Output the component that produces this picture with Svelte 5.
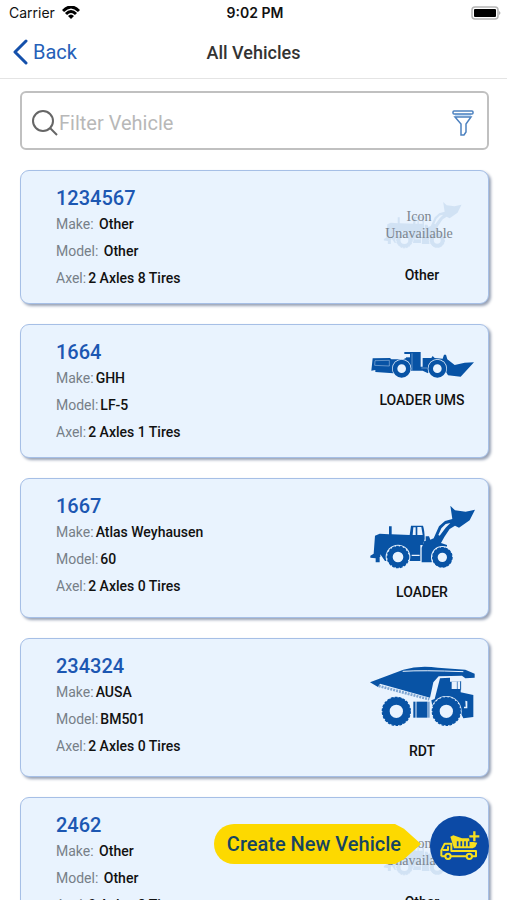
<script lang="ts">
  type Kind = 'none' | 'ums' | 'loader' | 'rdt';
  type Vehicle = { id: string; make: string; model: string; axel: string; type: string; kind: Kind };

  const vehicles: Vehicle[] = [
    { id: '1234567', make: ' Other', model: ' Other', axel: '2 Axles 8 Tires', type: 'Other', kind: 'none' },
    { id: '1664', make: 'GHH', model: 'LF-5', axel: '2 Axles 1 Tires', type: 'LOADER UMS', kind: 'ums' },
    { id: '1667', make: 'Atlas Weyhausen', model: '60', axel: '2 Axles 0 Tires', type: 'LOADER', kind: 'loader' },
    { id: '234324', make: 'AUSA', model: 'BM501', axel: '2 Axles 0 Tires', type: 'RDT', kind: 'rdt' },
    { id: '2462', make: ' Other', model: ' Other', axel: '2 Axles 8 Tires', type: 'Other', kind: 'none' },
  ];

  let query = $state('');
  let shown = $derived(vehicles.filter((v) => v.id.includes(query.trim())));
</script>

{#snippet loaderShape()}
  <path d="M46 122 L60 116 L88 118 V94 H96 V118 L150 120 L154 92 H190 Q195 106 195 132 L190 150 H182 V198 H76 L62 178 V186 H60 V202 H48 V190 L32 188 V182 L42 176 Z" />
  <path d="M186 202 V158 L194 138 H198 V124 H208 L212 134 L222 130 L238 94 L256 78 L278 72 L272 32 L286 46 L318 50 L346 44 L330 76 L298 98 L286 92 L270 102 L254 126 L244 144 L262 150 V155 L236 156 L216 202 Z" />
  <path class="cut" d="M161 97 H168 V120 H159 Z M173 96 H185 L189 120 H173 Z M245 100 L258 87 L272 84 L258 98 L240 122 L236 120 Z M156 179 H180 V183 H156 Z" />
  <circle class="gap" cx="115" cy="186" r="37" />
  <circle class="tyre thick" cx="115" cy="186" r="24" />
  <circle class="tread" cx="115" cy="186" r="32" />
  <circle class="gap" cx="248" cy="187" r="34" />
  <circle class="tyre thick" cx="248" cy="187" r="22" />
  <circle class="tread" cx="248" cy="187" r="29" />
{/snippet}

{#snippet vehicleIcon(kind: Kind)}
  {#if kind === 'ums'}
    <svg class="art" width="103" height="28" viewBox="31 42 309 84" aria-hidden="true">
      <path d="M36 67 L88 66 L92 70 H128 L136 66 V54 H131 V48 H180 V92 H186 V66 H212 L216 60 L222 66 L246 68 L250 56 H256 L260 70 L282 87 L312 80 L340 79 L300 122 L262 118 L254 104 H206 L202 112 L186 104 H148 L144 112 H98 L44 108 V102 L32 104 Z" />
      <path class="line faint" d="M43 74 L86 73 V90 L42 88 Z M154 52 V104 M182 96 H200" />
      <path class="cut" d="M136 54 H148 V64 H136 Z" />
      <circle class="gap" cx="123" cy="98" r="29" />
      <circle class="tyre" cx="123" cy="98" r="20" />
      <circle class="gap" cx="230" cy="98" r="29" />
      <circle class="tyre" cx="230" cy="98" r="20" />
    </svg>
  {:else if kind === 'loader'}
    <svg class="art" width="105" height="66" viewBox="31 27 315 198" aria-hidden="true">
      {@render loaderShape()}
    </svg>
  {:else if kind === 'rdt'}
    <svg class="art" width="105" height="65" viewBox="32 27 315 195" aria-hidden="true">
      <path d="M32 82 L132 44 Q180 30 236 38 L318 44 L346 56 V68 L318 70 L308 62 L238 64 L222 82 L212 128 L62 86 L56 96 Z" />
      <path class="line" d="M130 49 Q190 45 312 50" />
      <path class="teeth" d="M58 93 L210 133" />
      <path d="M242 70 L272 68 V80 H304 V112 L342 120 V186 L312 190 L302 170 H222 L216 136 L226 132 Z" />
      <path d="M162 140 H210 V188 H162 Z" />
      <path class="line" d="M170 138 V190 M206 138 V190" />
      <path class="cut" d="M277 80 H302 V102 H277 Z M318 137 L324 139 V160 H314 V155 H319 Z" />
      <path class="thin" d="M294 80 V102" />
      <path class="thin" d="M304 78 V104 H274" />
      <circle class="gap" cx="111" cy="169" r="46" />
      <circle class="tyre big" cx="111" cy="169" r="31" />
      <circle class="tread big" cx="111" cy="169" r="42" />
      <circle class="gap" cx="261" cy="169" r="46" />
      <circle class="tyre big" cx="261" cy="169" r="31" />
      <circle class="tread big" cx="261" cy="169" r="42" />
    </svg>
  {:else}
    <svg class="art" width="78" height="57" viewBox="0 0 78 57" role="img" aria-label="Icon Unavailable">
      <g class="ghost" transform="translate(-7 -2) scale(0.247)">{@render loaderShape()}</g>
      <text x="36" y="25">Icon</text>
      <text x="36" y="42">Unavailable</text>
    </svg>
  {/if}
{/snippet}

<div class="screen">
  <div class="status">
    <span class="carrier">
      Carrier
      <svg width="18" height="14" viewBox="0 0 18 14" aria-hidden="true">
        <path d="M1 5 Q9 -3 17 5" />
        <path d="M4 8 Q9 3 14 8" />
        <path class="dot" d="M6 10 Q9 7 12 10 L9 13 Z" />
      </svg>
    </span>
    <span class="time">9:02 PM</span>
    <svg class="battery" width="30" height="14" viewBox="0 0 30 14" aria-hidden="true">
      <rect class="shell" x="1" y="1" width="26" height="12" rx="3" />
      <rect x="3" y="3" width="22" height="8" rx="1" />
      <path class="nub" d="M28 5 Q31 7 28 9 Z" />
    </svg>
  </div>

  <header>
    <button class="back">
      <svg width="16" height="26" viewBox="0 0 16 26" aria-hidden="true"><path d="M14 2 L3 13 L14 24" /></svg>
      Back
    </button>
    <h1>All Vehicles</h1>
  </header>

  <main>
    <div class="search">
      <svg width="26" height="26" viewBox="0 0 26 26" aria-hidden="true">
        <circle cx="11" cy="11" r="10" />
        <path d="M18 18 L25 25" />
      </svg>
      <input type="text" placeholder="Filter Vehicle" aria-label="Filter Vehicle" bind:value={query} />
      <button class="filter" aria-label="Filter options">
        <svg width="22" height="26" viewBox="0 0 22 26" aria-hidden="true">
          <path class="soft" d="M3 5 H19" />
          <rect x="1" y="1" width="20" height="3" rx="1" />
          <path d="M3 7 H19 L14 14 V22 L12 25 H9 V14 Z" />
        </svg>
      </button>
    </div>

    {#each shown as v}
      <article class="card">
        <div class="info">
          <h2>{v.id}</h2>
          <p>Make:<b>{v.make}</b></p>
          <p>Model:<b>{v.model}</b></p>
          <p>Axel:<b>{v.axel}</b></p>
        </div>
        <div class="kind">
          {@render vehicleIcon(v.kind)}
          <span>{v.type}</span>
        </div>
      </article>
    {/each}
  </main>

  <div class="create">
    <span class="tip" id="create-tip">Create New Vehicle</span>
    <button class="fab" aria-labelledby="create-tip">
      <svg width="40" height="30" viewBox="0 0 120 90" aria-hidden="true">
        <path class="fill" d="M31 17 L40 13 L66 22 H88 V33 H100 L112 35 L106 48 L98 52 H42 Z" />
        <path class="slot" d="M53 31 V46 M64 31 V46 M75 31 V46 M86 31 V46" />
        <path class="frame" d="M4 76 V58 L14 38 H34 V60 H108 V76 H96 M80 76 H32 M16 76 H4 M8 57 H24 V46" />
        <circle class="frame" cx="24" cy="76" r="8" />
        <circle class="frame" cx="88" cy="76" r="8" />
        <path class="plus-edge" d="M103 1 V33 M87 16 H119" />
        <path class="plus" d="M103 1 V31 M88 16 H118" />
      </svg>
    </button>
  </div>
</div>

<style>
  :global(body) { margin: 0; background: #fff; }

  .screen {
    position: relative;
    height: 100vh;
    display: flex;
    flex-direction: column;
    overflow: hidden;
    font-family: Roboto, 'Liberation Sans', sans-serif;
    color: #111;
  }
  button { padding: 0; border: 0; background: none; font: inherit; cursor: pointer; }

  .status {
    display: grid;
    grid-template-columns: 1fr auto 1fr;
    align-items: center;
    height: 26px;
    padding: 0 6px 0 9px;
    font: 500 14px/26px Inter, sans-serif;
  }
  .carrier { display: flex; align-items: center; gap: 7px; font-weight: 400; }
  .carrier path { fill: none; stroke: #000; stroke-width: 3; }
  .carrier .dot { fill: #000; stroke: none; }
  .time { font-weight: 600; }
  .battery { justify-self: end; }
  .shell { fill: #fff; stroke: #b5b5b5; stroke-width: 1.5; }
  .nub { fill: #b5b5b5; }

  header {
    display: grid;
    grid-template-columns: 1fr auto 1fr;
    align-items: center;
    height: 52px;
    padding: 0 12px;
    border-bottom: 1px solid #e4e4e4;
  }
  .back { display: flex; align-items: center; gap: 5px; justify-self: start; font-size: 20px; color: #2560b8; }
  .back path { fill: none; stroke: #1450ab; stroke-width: 3; stroke-linecap: round; stroke-linejoin: round; }
  h1 { margin: 0; font-size: 18px; font-weight: 500; color: #333; }

  main {
    flex: 1;
    display: flex;
    flex-direction: column;
    gap: 20px;
    padding: 12px 18px 20px 20px;
    overflow-y: auto;
    scrollbar-width: none;
  }

  .search {
    flex: none;
    display: flex;
    align-items: center;
    height: 51px;
    padding: 4px 13px 0 10px;
    border: 2px solid #c0c0c0;
    border-radius: 6px;
  }
  .search svg { flex: none; fill: none; stroke: #666; stroke-width: 2; }
  input {
    flex: 1;
    min-width: 0;
    padding: 0 1px;
    border: 0;
    outline: 0;
    background: none;
    font: 20px/28px Roboto, sans-serif;
    color: #333;
  }
  input::placeholder { color: #b8b8b8; opacity: 1; }
  .filter { display: flex; }
  .search .filter svg { stroke: #4d82c0; stroke-width: 1.5; }
  .search .filter .soft { stroke: #c5dcf4; stroke-width: 3; }

  .card {
    flex: none;
    display: flex;
    justify-content: space-between;
    border: 1px solid #a6bfe6;
    border-radius: 9px;
    background: #e9f3fe;
    box-shadow: 2px 2px 3px #98a2b5;
  }
  .info { padding: 15px 0 11px 35px; }
  h2 { margin: 0; font-size: 20px; line-height: 25px; font-weight: 500; color: #1c57b2; }
  p { margin: 0; font-size: 14px; line-height: 27px; color: #777f88; white-space: pre; }
  b { margin-left: 2px; font-weight: 500; color: #111; }

  .kind {
    display: flex;
    flex-direction: column;
    align-items: center;
    gap: 13px;
    width: 132px;
    padding: 25px 0 16px;
  }
  .kind span { font-size: 14px; line-height: 18px; font-weight: 500; }

  .art { fill: #0853a5; overflow: visible; }
  .cut { fill: #e9f3fe; }
  .line { fill: none; stroke: #e9f3fe; stroke-width: 3; }
  .line.faint { stroke-width: 2; opacity: 0.6; }
  .thin { fill: none; stroke: #0853a5; stroke-width: 2; }
  .teeth { fill: none; stroke: #7da5d2; stroke-width: 8; stroke-dasharray: 6 3; }
  .gap { fill: #e9f3fe; }
  .tyre { fill: #e9f3fe; stroke: #0853a5; stroke-width: 14; }
  .tyre.thick { stroke-width: 16; }
  .tyre.big { stroke-width: 22; }
  .tread { fill: none; stroke: #0853a5; stroke-width: 4; stroke-dasharray: 8 4; }
  .ghost { opacity: 0.1; }
  .art text { font: 14px 'Liberation Serif', serif; fill: #7b858f; text-anchor: middle; }

  .create {
    position: absolute;
    right: 18px;
    bottom: 24px;
    display: flex;
    align-items: center;
    gap: 9px;
  }
  .tip {
    margin-bottom: 4px;
    padding: 0 20px 0 13px;
    border-radius: 20px 0 0 20px;
    background: #fdd900;
    clip-path: polygon(0 0, calc(100% - 26px) 0, calc(100% - 17px) 12%, 100% 50%, calc(100% - 17px) 88%, calc(100% - 26px) 100%, 0 100%);
    font-size: 20px;
    line-height: 40px;
    font-weight: 500;
    color: #164560;
  }
  .fab {
    display: flex;
    align-items: center;
    justify-content: center;
    width: 59px;
    height: 60px;
    border-radius: 50%;
    background: #0c4aa6;
  }
  .fill { fill: #f7df1e; }
  .slot { fill: none; stroke: #0c4aa6; stroke-width: 5; }
  .frame { fill: none; stroke: #f7df1e; stroke-width: 6; stroke-linejoin: round; }
  circle.frame { fill: #0c4aa6; }
  .plus-edge { stroke: #0c4aa6; stroke-width: 14; }
  .plus { stroke: #f7df1e; stroke-width: 7; }
</style>
